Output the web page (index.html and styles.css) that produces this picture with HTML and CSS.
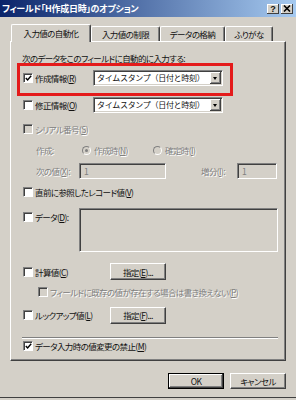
FILE: index.html
```html
<!DOCTYPE html>
<html lang="ja">
<head>
  <meta charset="UTF-8" />
  <title>フィールドのオプション</title>
  <link rel="stylesheet" href="styles.css">
</head>
<body>
  <div class="window">
    <div class="titlebar">
      <span class="title">フィールド「H作成日時」のオプション</span>
      <span class="title-buttons">
        <span class="tbtn help">?</span>
        <span class="tbtn">
          <svg width="8" height="7" viewBox="0 0 8 7"><path d="M1 0.5 L7 6.5 M7 0.5 L1 6.5" stroke="#000" stroke-width="1.6"/></svg>
        </span>
      </span>
    </div>

    <div class="tabs">
      <div class="tab active tab1">入力値の自動化</div>
      <div class="tab tab2">入力値の制限</div>
      <div class="tab tab3">データの格納</div>
      <div class="tab tab4">ふりがな</div>
    </div>

    <div class="panel">
      <div class="row heading">次のデータをこのフィールドに自動的に入力する:</div>

      <div class="row row-select">
        <label class="check"><span class="box"><svg width="7" height="7" viewBox="0 0 7 7"><path d="M0.8 3 L2.6 5 L6.2 0.8" stroke="#000" stroke-width="1.4" fill="none"/></svg></span>作成情報(<u>R</u>)</label>
        <div class="select">タイムスタンプ（日付と時刻）<span class="arrow"></span></div>
      </div>

      <div class="row row-select row-mod">
        <label class="check"><span class="box"></span>修正情報(<u>O</u>)</label>
        <div class="select">タイムスタンプ（日付と時刻）<span class="arrow"></span></div>
      </div>

      <div class="row row-serial">
        <label class="check disabled"><span class="box"></span>シリアル番号(<u>S</u>)</label>
      </div>

      <div class="row row-radio disabled">
        <span class="radio-label">作成:</span>
        <span class="radio on"></span><span class="radio-text">作成時(<u>N</u>)</span>
        <span class="radio"></span><span>確定時(<u>I</u>)</span>
      </div>

      <div class="row row-next disabled">
        <span class="next-label">次の値(<u>X</u>):</span>
        <span class="field next-field">1</span>
        <span class="step-label">増分(<u>I</u>):</span>
        <span class="field step-field">1</span>
      </div>

      <div class="row row-prev">
        <label class="check"><span class="box"></span>直前に参照したレコード値(<u>V</u>)</label>
      </div>

      <div class="row row-data">
        <label class="check"><span class="box"></span>データ(<u>D</u>):</label>
        <div class="field data-field"></div>
      </div>

      <div class="row row-calc">
        <label class="check"><span class="box"></span>計算値(<u>C</u>)</label>
        <button class="btn small">指定(<u>E</u>)...</button>
      </div>

      <div class="row row-sub">
        <label class="check disabled"><span class="box"></span>フィールドに既存の値が存在する場合は書き換えない(<u>P</u>)</label>
      </div>

      <div class="row row-lookup">
        <label class="check"><span class="box"></span>ルックアップ値(<u>L</u>)</label>
        <button class="btn small">指定(<u>F</u>)...</button>
      </div>

      <div class="separator"></div>

      <div class="row row-lock">
        <label class="check"><span class="box"><svg width="7" height="7" viewBox="0 0 7 7"><path d="M0.8 3 L2.6 5 L6.2 0.8" stroke="#000" stroke-width="1.4" fill="none"/></svg></span>データ入力時の値変更の禁止(<u>M</u>)</label>
      </div>

      <div class="highlight"></div>
    </div>

    <div class="actions">
      <button class="btn default">OK</button>
      <button class="btn">キャンセル</button>
    </div>
  </div>
</body>
</html>
```

FILE: styles.css
```css
body {
  margin: 0;
  background-color: #d4d0c8;
  font-family: "Noto Sans CJK JP", "Noto Sans", sans-serif;
  font-size: 8.5px;
  letter-spacing: -0.6px;
  font-feature-settings: "palt";
  color: #111;
}

.window {
  width: 296px;
  height: 398px;
  box-sizing: border-box;
  border-bottom: 1px solid #404040;
  background-color: #d4d0c8;
}

.titlebar {
  height: 17px;
  display: flex;
  align-items: center;
  justify-content: space-between;
  padding: 0 3px 0 2px;
  background: linear-gradient(to right, #0a246a, #a6caf0);
}

.title {
  color: #fff;
  font-weight: bold;
  font-size: 9px;
  letter-spacing: -0.3px;
  white-space: nowrap;
}

.title-buttons {
  display: flex;
  gap: 2px;
}

.tbtn {
  width: 12px;
  height: 10px;
  box-sizing: border-box;
  display: flex;
  align-items: center;
  justify-content: center;
  background-color: #d4d0c8;
  box-shadow: inset -1px -1px #404040, inset 1px 1px #fff;
  font-family: "Liberation Sans", sans-serif;
  font-weight: bold;
  font-size: 9px;
  letter-spacing: 0;
  line-height: 10px;
}

/* tabs */
.tabs {
  display: flex;
  align-items: flex-end;
  height: 17px;
  margin: 7px 0 0 11px;
}

.tab {
  height: 15px;
  box-sizing: border-box;
  border-top: 1px solid #fff;
  border-left: 1px solid #fff;
  border-right: 1px solid #404040;
  box-shadow: inset -1px 0 #808080;
  border-radius: 2px 2px 0 0;
  background-color: #d4d0c8;
  text-align: center;
  line-height: 14px;
  white-space: nowrap;
}

.tab.active {
  height: 18px;
  margin-bottom: -1px;
  line-height: 16px;
  position: relative;
  z-index: 1;
}

.tab1 { width: 80px; }
.tab2 { width: 69px; }
.tab3 { width: 65px; }
.tab4 { width: 48px; }

/* panel */
.panel {
  position: relative;
  width: 276px;
  height: 320px;
  margin-left: 10px;
  box-sizing: border-box;
  border-top: 1px solid #fff;
  border-left: 1px solid #fff;
  border-right: 1px solid #404040;
  border-bottom: 1px solid #404040;
  box-shadow: inset -1px -1px #808080;
  padding: 10px 0 0 12px;
}

.row {
  display: flex;
  align-items: center;
  height: 12px;
  white-space: nowrap;
}

.heading { margin-left: -1px; }

.check {
  display: flex;
  align-items: center;
}

.box {
  width: 10px;
  height: 10px;
  box-sizing: border-box;
  margin-right: 2px;
  border: 1px solid;
  border-color: #808080 #fff #fff #808080;
  box-shadow: inset 1px 1px #404040;
  background-color: #fff;
  display: flex;
  align-items: center;
  justify-content: center;
  flex-shrink: 0;
}

.box svg { margin: 1px 0 0 1px; }

.disabled {
  color: #808080;
  text-shadow: 1px 1px 0 #fff;
}

.disabled .box { background-color: #d4d0c8; }

.row-select { height: 16px; margin-top: 6px; }
.row-select .check { width: 70px; }
.row-mod { margin-top: 11px; }

.select {
  position: relative;
  width: 130px;
  height: 16px;
  box-sizing: border-box;
  border: 1px solid;
  border-color: #808080 #fff #fff #808080;
  box-shadow: inset 1px 1px #404040, inset -1px -1px #d4d0c8;
  background-color: #fff;
  padding-left: 3px;
  line-height: 14px;
  font-size: 8px;
  font-feature-settings: normal;
  letter-spacing: -0.3px;
}

.arrow {
  position: absolute;
  right: 1px;
  top: 1px;
  width: 11px;
  height: 12px;
  background-color: #d4d0c8;
  box-shadow: inset -1px -1px #404040, inset 1px 1px #fff, inset -2px -2px #808080;
}

.arrow::after {
  content: "";
  position: absolute;
  left: 3px;
  top: 5px;
  border-left: 2.5px solid transparent;
  border-right: 2.5px solid transparent;
  border-top: 3px solid #000;
}

.row-serial { margin-top: 10px; }

.row-radio {
  margin-top: 9px;
  padding-left: 13px;
}

.radio-label { width: 46px; }
.radio-text { width: 59px; }

.radio {
  width: 9px;
  height: 9px;
  box-sizing: border-box;
  margin-right: 3px;
  border-radius: 50%;
  border: 1px solid;
  border-color: #808080 #fff #fff #808080;
  background-color: #d4d0c8;
  position: relative;
}

.radio.on::after {
  content: "";
  position: absolute;
  left: 2px;
  top: 2px;
  width: 3px;
  height: 3px;
  border-radius: 50%;
  background-color: #808080;
}

.row-next {
  height: 16px;
  margin-top: 7px;
  padding-left: 13px;
}

.next-label { width: 43px; }

.field {
  height: 16px;
  box-sizing: border-box;
  border: 1px solid;
  border-color: #808080 #fff #fff #808080;
  box-shadow: inset 1px 1px #404040, inset -1px -1px #d4d0c8;
  background-color: #d4d0c8;
  padding-left: 4px;
  line-height: 14px;
  text-shadow: none;
}

.next-field { width: 87px; }
.step-label { width: 36px; margin-left: 35px; }
.step-field { width: 40px; }

.row-prev { margin-top: 7px; }

.row-data {
  height: 44px;
  margin-top: 10px;
  align-items: flex-start;
}

.row-data .check { width: 56px; padding-top: 3px; }
.data-field { width: 199px; height: 44px; }

.row-calc { height: 17px; margin-top: 11px; }
.row-calc .check,
.row-lookup .check { width: 87px; }

.row-sub { margin-top: 6px; padding-left: 15px; }

.row-lookup { height: 16px; margin-top: 9px; }

.separator {
  width: 256px;
  margin: 14px 0 0 -1px;
  border-top: 1px solid #808080;
  border-bottom: 1px solid #fff;
}

.row-lock { margin-top: 1px; }

.btn {
  height: 16px;
  width: 56px;
  padding: 0;
  box-sizing: border-box;
  border: 1px solid;
  border-color: #fff #404040 #404040 #fff;
  box-shadow: inset -1px -1px #808080;
  background-color: #d4d0c8;
  font-family: inherit;
  font-size: 8.5px;
  letter-spacing: -0.6px;
  font-feature-settings: "palt";
  color: #111;
}

.btn.small { height: 17px; }

.btn.default {
  border: 1px solid #000;
  box-shadow: inset -1px -1px #404040, inset 1px 1px #fff, inset -2px -2px #808080;
}

.highlight {
  position: absolute;
  left: 6px;
  top: 21px;
  width: 216px;
  height: 33px;
  box-sizing: border-box;
  border: 3px solid #e41b1b;
  pointer-events: none;
}

.actions {
  display: flex;
  justify-content: flex-end;
  gap: 6px;
  margin-top: 12px;
  padding-right: 10px;
}
```
